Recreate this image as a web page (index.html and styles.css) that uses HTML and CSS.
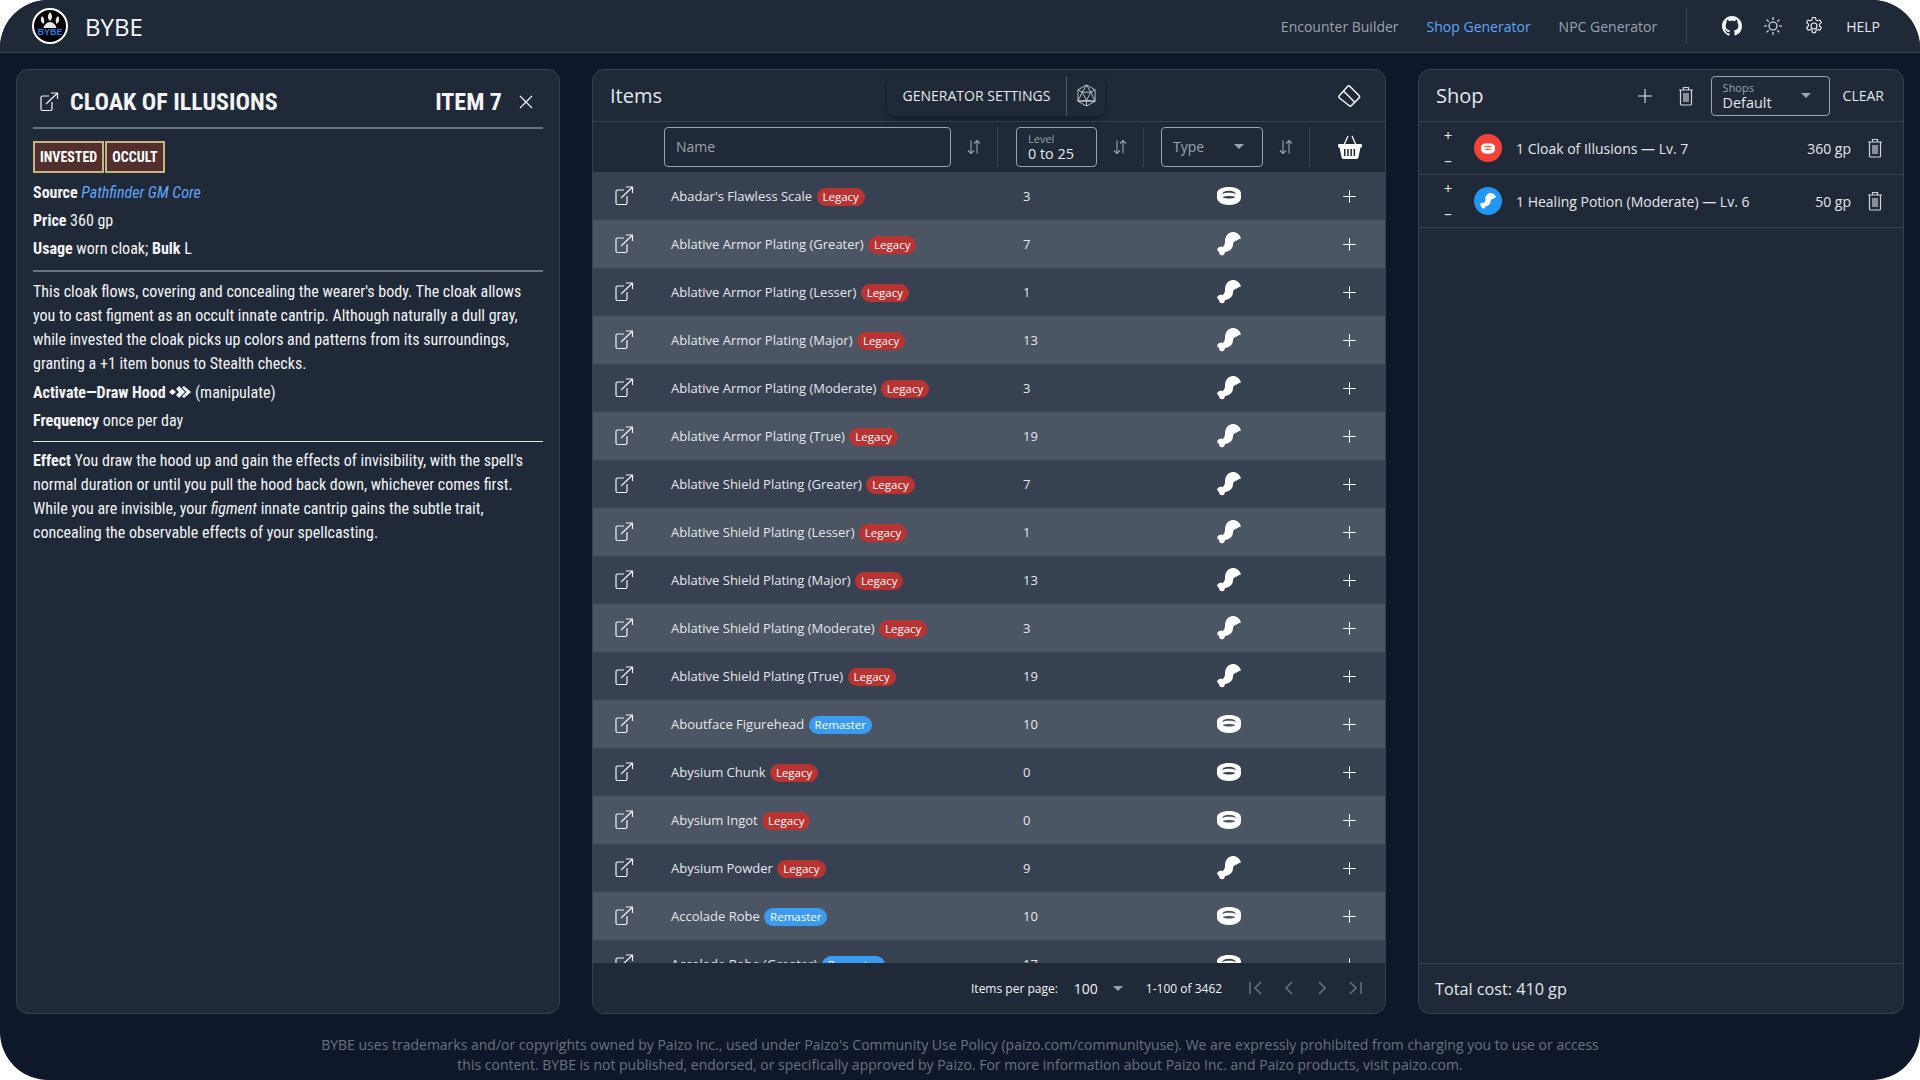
FILE: index.html
```html
<!DOCTYPE html>
<html lang="en">
<head>
    <meta charset="UTF-8">
    <title>BYBE - Shop Generator</title>
    <link rel="stylesheet" href="styles.css">
</head>
<body>
    <svg class="icon-defs">
        <symbol id="i-link" viewBox="0 0 20 20"><path d="M10 4H3.500A1.500 1.500 0 0 0 2 5.500V17a1.500 1.500 0 0 0 1.500 1.500h8A1.500 1.500 0 0 0 13 17v-7M7 12 18 1.500M12 1h6.500v6" fill="none" stroke="currentColor" stroke-width="1.200"/></symbol>
        <symbol id="i-ring" viewBox="0 0 24 18"><path fill-rule="evenodd" fill="currentColor" d="M12 0C5 0 0 2.500 0 6.500v4C0 15 5 18 12 18s12-3 12-7.500v-4C24 2.500 19 0 12 0ZM12 3.800c3.500 0 6 1.200 7 3.200-2-.8-4.400-1.200-7-1.200S7 6.200 5 7c1-2 3.500-3.200 7-3.200Zm0 5.200c2.500 0 4.500.3 6.500 1-1.500 1-3.800 1.600-6.500 1.600S7 11 5.500 10c2-.7 4-1 6.500-1Z"/></symbol>
        <symbol id="i-leg" viewBox="0 0 24 24"><path fill="currentColor" d="M24 6.500C23 2.500 19.500 0 16 0 11.500 0 8 4 8 9.500c0 2.500-.5 4.500-2.500 5.500-1.500-.5-4-.3-5 1.500-.7 1.500.3 3 1.500 3.300 0 1.700.8 3.400 2.800 3.500 2 .2 3.200-1.300 2.900-3 2.500-.8 5-1.500 7-3.800 1.300-1.500 1-4 1.800-6 .8-1.500 3-1.500 5.500-3.500Z"/></symbol>
        <symbol id="i-plus" viewBox="0 0 14 14"><path d="M7 0v14M0 7h14" stroke="currentColor" stroke-width="1.100"/></symbol>
        <symbol id="i-sort" viewBox="0 0 14 16"><path d="M4 1.500v13M1 11.500l3 3 3-3M10 14.500v-13M7 4.500l3-3 3 3" fill="none" stroke="currentColor" stroke-width="1.100"/></symbol>
        <symbol id="i-trash" viewBox="0 0 16 20"><path d="M1 4h14M5.500 4V1.500h5V4M2.500 4v14a1 1 0 0 0 1 1h9a1 1 0 0 0 1-1V4M6 7v9M8 7v9M10 7v9" fill="none" stroke="currentColor" stroke-width="1.200"/></symbol>
        <symbol id="i-first" viewBox="0 0 16 16"><path d="M2 2v12M13 2 7 8l6 6" fill="none" stroke="currentColor" stroke-width="1.500"/></symbol>
        <symbol id="i-prev" viewBox="0 0 16 16"><path d="M11 2 5 8l6 6" fill="none" stroke="currentColor" stroke-width="1.500"/></symbol>
        <symbol id="i-next" viewBox="0 0 16 16"><path d="m5 2 6 6-6 6" fill="none" stroke="currentColor" stroke-width="1.500"/></symbol>
        <symbol id="i-last" viewBox="0 0 16 16"><path d="M14 2v12M3 2l6 6-6 6" fill="none" stroke="currentColor" stroke-width="1.500"/></symbol>
    </svg>

    <div class="app">
        <header class="topbar">
            <svg class="logo" viewBox="0 0 36 36">
                <circle cx="18" cy="18" r="17" fill="#000" stroke="#fff" stroke-width="2"/>
                <path d="M18 4c2.500 3 3 6 0 9-3-3-2.500-6 0-9ZM10 8c2.500 2 3 5 1.500 8-3-2-3.500-5-1.500-8ZM26 8c2 3 1.500 6-1.500 8-1.500-3-1-6 1.500-8ZM18 14c3 0 6 3 6.500 6h-13c.500-3 3.500-6 6.500-6Z" fill="#e5e5e5"/>
                <text class="logo-text" x="18" y="27" text-anchor="middle">BYBE</text>
            </svg>
            <span class="brand">BYBE</span>
            <nav class="topnav">
                <a href="#">Encounter Builder</a>
                <a href="#" class="active">Shop Generator</a>
                <a href="#">NPC Generator</a>
            </nav>
            <div class="top-actions">
                <svg class="top-icon" viewBox="0 0 16 16" width="20" height="20"><path fill="currentColor" d="M8 0C3.580 0 0 3.580 0 8c0 3.540 2.290 6.530 5.470 7.590.4.070.55-.17.55-.38 0-.19-.01-.82-.01-1.490-2.010.37-2.530-.49-2.690-.94-.09-.23-.48-.94-.82-1.130-.28-.15-.68-.52-.01-.53.63-.01 1.080.58 1.230.82.72 1.210 1.870.87 2.330.66.07-.52.28-.87.51-1.070-1.780-.2-3.640-.89-3.640-3.950 0-.87.31-1.590.82-2.150-.08-.2-.36-1.020.08-2.120 0 0 .67-.21 2.200.82.64-.18 1.320-.27 2-.27.68 0 1.360.09 2 .27 1.530-1.040 2.200-.82 2.200-.82.44 1.100.16 1.920.08 2.120.51.56.82 1.270.82 2.150 0 3.070-1.870 3.750-3.650 3.950.29.25.54.73.54 1.480 0 1.070-.01 1.930-.01 2.200 0 .21.15.46.55.38A8.013 8.013 0 0 0 16 8c0-4.420-3.580-8-8-8z"/></svg>
                <svg class="top-icon" viewBox="0 0 20 20" width="20" height="20"><circle cx="10" cy="10" r="4" fill="none" stroke="currentColor" stroke-width="1.100"/><path d="M10 1v3M10 16v3M1 10h3M16 10h3M3.600 3.600l2.100 2.100M14.300 14.300l2.100 2.100M3.600 16.400l2.100-2.100M14.300 5.700l2.100-2.100" stroke="currentColor" stroke-width="1.100"/></svg>
                <svg class="top-icon" viewBox="0 0 20 20" width="20" height="20"><circle cx="10" cy="10" r="3" fill="none" stroke="currentColor" stroke-width="1.100"/><path d="M8.500 1.500h3l.5 2.400 1.600.9 2.300-.8 1.500 2.600-1.800 1.600v1.800l1.800 1.600-1.500 2.600-2.300-.8-1.600.9-.5 2.400h-3l-.5-2.400-1.600-.9-2.300.8-1.500-2.600 1.800-1.600v-1.800L2.600 6.600l1.500-2.600 2.300.8 1.600-.9Z" fill="none" stroke="currentColor" stroke-width="1.100" stroke-linejoin="round"/></svg>
                <span class="help">HELP</span>
            </div>
        </header>

        <main class="panels">
            <section class="panel detail">
                <div class="detail-head">
                    <svg class="link-icon"><use href="#i-link"/></svg>
                    <h2 class="detail-title"><span>CLOAK OF ILLUSIONS</span></h2>
                    <span class="detail-level">ITEM 7</span>
                    <svg class="close-icon" viewBox="0 0 14 14"><path d="m1 1 12 12M13 1 1 13" stroke="currentColor" stroke-width="1.300"/></svg>
                </div>
                <div class="traits">
                    <span class="trait">INVESTED</span><span class="trait">OCCULT</span>
                </div>
                <p class="line"><b>Source</b> <a href="#"><i>Pathfinder GM Core</i></a></p>
                <p class="line"><b>Price</b> 360 gp</p>
                <p class="line"><b>Usage</b> worn cloak; <b>Bulk</b> L</p>
                <hr class="rule">
                <p class="para">This cloak flows, covering and concealing the wearer's body. The cloak allows you to cast figment as an occult innate cantrip. Although naturally a dull gray, while invested the cloak picks up colors and patterns from its surroundings, granting a +1 item bonus to Stealth checks.</p>
                <p class="line activate"><b>Activate—Draw Hood</b> <svg class="actions" viewBox="0 0 22 14"><path fill="currentColor" fill-rule="evenodd" d="M3.500 4 7 7 3.500 10 0 7ZM10 1l6 6-6 6-3-3 3-3-3-3ZM15 1l7 6-7 6-2-1.500L17.500 7 13 2.500Z"/></svg> (manipulate)</p>
                <p class="line"><b>Frequency</b> once per day</p>
                <hr class="rule thin">
                <p class="para"><b>Effect</b> You draw the hood up and gain the effects of invisibility, with the spell's normal duration or until you pull the hood back down, whichever comes first. While you are invisible, your <i>figment</i> innate cantrip gains the subtle trait, concealing the observable effects of your spellcasting.</p>
            </section>

            <section class="panel items">
                <div class="panel-head">
                    <h2 class="panel-title">Items</h2>
                    <div class="gen-btn">
                        <span class="gen-label">GENERATOR SETTINGS</span>
                        <span class="gen-icon">
                            <svg viewBox="0 0 22 24" width="21" height="23"><path d="M11 1 20 6v12l-9 5-9-5V6ZM11 1 6.500 8.500h9ZM6.500 8.500 2 6M15.500 8.500 20 6M6.500 8.500 11 17l4.500-8.500M2 18l4.500-9.500M20 18l-4.500-9.500M2 18h18M11 17v6M11 17 2 18M11 17l9 1" fill="none" stroke="#d1d5db" stroke-width=".9"/></svg>
                        </span>
                    </div>
                    <svg class="eraser" viewBox="0 0 24 24" width="24" height="24"><path d="M13 2.500 22 11.500a1.800 1.800 0 0 1 0 2.500l-7.500 7.500a1.800 1.800 0 0 1-2.500 0L2.500 14a1.800 1.800 0 0 1 0-2.500L10.500 2.500a1.800 1.800 0 0 1 2.500 0ZM6.500 7 17.500 18" fill="none" stroke="currentColor" stroke-width="1.500"/></svg>
                </div>
                <div class="filters">
                    <div class="field field-name">Name</div>
                    <div class="sort-cell"><svg class="sort"><use href="#i-sort"/></svg></div>
                    <div class="field field-level"><span class="field-small">Level</span><span class="field-value">0 to 25</span></div>
                    <div class="sort-cell"><svg class="sort"><use href="#i-sort"/></svg></div>
                    <div class="field field-type">Type<span class="caret"></span></div>
                    <div class="sort-cell"><svg class="sort"><use href="#i-sort"/></svg></div>
                    <div class="basket-cell">
                        <svg viewBox="0 0 24 24" width="24" height="24"><path d="M6 10 10 1M18 10 14 1" stroke="#fff" stroke-width="1.300" fill="none"/><path fill="#fff" fill-rule="evenodd" d="M1 9h22a1 1 0 0 1 1 1v1.500a1 1 0 0 1-1 1h-.5L20.500 22a2 2 0 0 1-2 2h-13a2 2 0 0 1-2-2L1.500 12.500H1a1 1 0 0 1-1-1V10a1 1 0 0 1 1-1ZM6 14v7h1.500v-7Zm3.200 0v7h1.500v-7Zm3.200 0v7h1.500v-7Zm3.200 0v7h1.500v-7Z"/></svg>
                    </div>
                </div>
                <div class="rows">
                    <div class="row"><svg class="link-icon"><use href="#i-link"/></svg><div class="name">Abadar's Flawless Scale <span class="badge legacy">Legacy</span></div><div>3</div><svg class="type-ring"><use href="#i-ring"/></svg><span></span><svg class="plus"><use href="#i-plus"/></svg></div>
                    <div class="row"><svg class="link-icon"><use href="#i-link"/></svg><div class="name">Ablative Armor Plating (Greater) <span class="badge legacy">Legacy</span></div><div>7</div><svg class="type-leg"><use href="#i-leg"/></svg><span></span><svg class="plus"><use href="#i-plus"/></svg></div>
                    <div class="row"><svg class="link-icon"><use href="#i-link"/></svg><div class="name">Ablative Armor Plating (Lesser) <span class="badge legacy">Legacy</span></div><div>1</div><svg class="type-leg"><use href="#i-leg"/></svg><span></span><svg class="plus"><use href="#i-plus"/></svg></div>
                    <div class="row"><svg class="link-icon"><use href="#i-link"/></svg><div class="name">Ablative Armor Plating (Major) <span class="badge legacy">Legacy</span></div><div>13</div><svg class="type-leg"><use href="#i-leg"/></svg><span></span><svg class="plus"><use href="#i-plus"/></svg></div>
                    <div class="row"><svg class="link-icon"><use href="#i-link"/></svg><div class="name">Ablative Armor Plating (Moderate) <span class="badge legacy">Legacy</span></div><div>3</div><svg class="type-leg"><use href="#i-leg"/></svg><span></span><svg class="plus"><use href="#i-plus"/></svg></div>
                    <div class="row"><svg class="link-icon"><use href="#i-link"/></svg><div class="name">Ablative Armor Plating (True) <span class="badge legacy">Legacy</span></div><div>19</div><svg class="type-leg"><use href="#i-leg"/></svg><span></span><svg class="plus"><use href="#i-plus"/></svg></div>
                    <div class="row"><svg class="link-icon"><use href="#i-link"/></svg><div class="name">Ablative Shield Plating (Greater) <span class="badge legacy">Legacy</span></div><div>7</div><svg class="type-leg"><use href="#i-leg"/></svg><span></span><svg class="plus"><use href="#i-plus"/></svg></div>
                    <div class="row"><svg class="link-icon"><use href="#i-link"/></svg><div class="name">Ablative Shield Plating (Lesser) <span class="badge legacy">Legacy</span></div><div>1</div><svg class="type-leg"><use href="#i-leg"/></svg><span></span><svg class="plus"><use href="#i-plus"/></svg></div>
                    <div class="row"><svg class="link-icon"><use href="#i-link"/></svg><div class="name">Ablative Shield Plating (Major) <span class="badge legacy">Legacy</span></div><div>13</div><svg class="type-leg"><use href="#i-leg"/></svg><span></span><svg class="plus"><use href="#i-plus"/></svg></div>
                    <div class="row"><svg class="link-icon"><use href="#i-link"/></svg><div class="name">Ablative Shield Plating (Moderate) <span class="badge legacy">Legacy</span></div><div>3</div><svg class="type-leg"><use href="#i-leg"/></svg><span></span><svg class="plus"><use href="#i-plus"/></svg></div>
                    <div class="row"><svg class="link-icon"><use href="#i-link"/></svg><div class="name">Ablative Shield Plating (True) <span class="badge legacy">Legacy</span></div><div>19</div><svg class="type-leg"><use href="#i-leg"/></svg><span></span><svg class="plus"><use href="#i-plus"/></svg></div>
                    <div class="row"><svg class="link-icon"><use href="#i-link"/></svg><div class="name">Aboutface Figurehead <span class="badge remaster">Remaster</span></div><div>10</div><svg class="type-ring"><use href="#i-ring"/></svg><span></span><svg class="plus"><use href="#i-plus"/></svg></div>
                    <div class="row"><svg class="link-icon"><use href="#i-link"/></svg><div class="name">Abysium Chunk <span class="badge legacy">Legacy</span></div><div>0</div><svg class="type-ring"><use href="#i-ring"/></svg><span></span><svg class="plus"><use href="#i-plus"/></svg></div>
                    <div class="row"><svg class="link-icon"><use href="#i-link"/></svg><div class="name">Abysium Ingot <span class="badge legacy">Legacy</span></div><div>0</div><svg class="type-ring"><use href="#i-ring"/></svg><span></span><svg class="plus"><use href="#i-plus"/></svg></div>
                    <div class="row"><svg class="link-icon"><use href="#i-link"/></svg><div class="name">Abysium Powder <span class="badge legacy">Legacy</span></div><div>9</div><svg class="type-leg"><use href="#i-leg"/></svg><span></span><svg class="plus"><use href="#i-plus"/></svg></div>
                    <div class="row"><svg class="link-icon"><use href="#i-link"/></svg><div class="name">Accolade Robe <span class="badge remaster">Remaster</span></div><div>10</div><svg class="type-ring"><use href="#i-ring"/></svg><span></span><svg class="plus"><use href="#i-plus"/></svg></div>
                    <div class="row"><svg class="link-icon"><use href="#i-link"/></svg><div class="name">Accolade Robe (Greater) <span class="badge remaster">Remaster</span></div><div>17</div><svg class="type-ring"><use href="#i-ring"/></svg><span></span><svg class="plus"><use href="#i-plus"/></svg></div>
                </div>
                <div class="pager">
                    <span class="pager-label">Items per page:</span>
                    <span class="pager-size">100</span>
                    <span class="caret"></span>
                    <span class="pager-range">1-100 of 3462</span>
                    <svg class="pager-icon"><use href="#i-first"/></svg>
                    <svg class="pager-icon"><use href="#i-prev"/></svg>
                    <svg class="pager-icon"><use href="#i-next"/></svg>
                    <svg class="pager-icon"><use href="#i-last"/></svg>
                </div>
            </section>

            <section class="panel shop">
                <div class="panel-head shop-head">
                    <h2 class="panel-title">Shop</h2>
                    <svg class="shop-plus"><use href="#i-plus"/></svg>
                    <svg class="trash"><use href="#i-trash"/></svg>
                    <div class="field field-shops"><span class="field-small">Shops</span><span class="field-value">Default</span><span class="caret"></span></div>
                    <span class="clear">CLEAR</span>
                </div>
                <div class="shop-row">
                    <div class="stepper"><span>+</span><span>–</span></div>
                    <span class="dot red"><svg class="dot-ring"><use href="#i-ring"/></svg></span>
                    <span class="shop-name">1 Cloak of Illusions — Lv. 7</span>
                    <span class="shop-price">360 gp</span>
                    <svg class="trash"><use href="#i-trash"/></svg>
                </div>
                <div class="shop-row">
                    <div class="stepper"><span>+</span><span>–</span></div>
                    <span class="dot blue"><svg class="dot-leg"><use href="#i-leg"/></svg></span>
                    <span class="shop-name">1 Healing Potion (Moderate) — Lv. 6</span>
                    <span class="shop-price">50 gp</span>
                    <svg class="trash"><use href="#i-trash"/></svg>
                </div>
                <div class="shop-total">Total cost: 410 gp</div>
            </section>
        </main>

        <footer class="legal">
            BYBE uses trademarks and/or copyrights owned by Paizo Inc., used under Paizo's Community Use Policy (paizo.com/communityuse). We are expressly prohibited from charging you to use or access this content. BYBE is not published, endorsed, or specifically approved by Paizo. For more information about Paizo Inc. and Paizo products, visit paizo.com.
        </footer>
    </div>
</body>
</html>
```

FILE: styles.css
```css
* {
    box-sizing: border-box;
}
html, body {
    margin: 0;
    height: 100%;
    background: #fff;
}
body {
    font-family: "Open Sans", sans-serif;
    color: #e5e7eb;
    overflow: hidden;
}
h2, p {
    margin: 0;
    font-weight: normal;
}
a {
    text-decoration: none;
    color: inherit;
}
.icon-defs {
    width: 0;
    height: 0;
    display: block;
}
.app {
    width: 1920px;
    height: 1080px;
    background: #0f172a;
    border-radius: 48px;
    overflow: hidden;
    display: flex;
    flex-direction: column;
}

/* top bar */
.topbar {
    height: 53px;
    flex: none;
    display: flex;
    align-items: center;
    padding: 0 40px 0 32px;
    background: #1f2937;
    border-bottom: 1px solid #374151;
}
.logo {
    width: 36px;
    height: 36px;
}
.logo-text {
    font-family: "Liberation Sans", sans-serif;
    font-size: 9px;
    font-weight: bold;
    fill: #1a7fe8;
}
.brand {
    margin-left: 17px;
    font-size: 24px;
    color: #f9fafb;
}
.topnav {
    margin-left: auto;
    display: flex;
    gap: 28px;
    font-size: 14px;
    color: #9ca3af;
}
.topnav .active {
    color: #60a5fa;
}
.top-actions {
    margin-left: 29px;
    padding-left: 35px;
    height: 36px;
    border-left: 1px solid #374151;
    display: flex;
    align-items: center;
    gap: 21px;
}
.top-icon {
    color: #f3f4f6;
}
.help {
    font-size: 14px;
    margin-left: 1px;
}

/* panels */
.panels {
    flex: none;
    height: 961px;
    padding: 16px 16px 0;
    display: grid;
    grid-template-columns: 544px 794px 486px;
    column-gap: 32px;
}
.panel {
    background: #1f2937;
    border: 1px solid #374151;
    border-radius: 12px;
    overflow: hidden;
    display: flex;
    flex-direction: column;
}

/* left detail panel */
.detail {
    padding: 0 16px;
    font-family: "Roboto", sans-serif;
    font-stretch: 75%;
    font-size: 16px;
    color: #f3f4f6;
}
.detail-head {
    height: 59px;
    flex: none;
    display: flex;
    align-items: center;
    border-bottom: 2px solid #6b7280;
    padding: 6px 2px 0 6px;
}
.detail-head .link-icon {
    width: 20px;
    height: 20px;
}
.detail-title {
    flex: 1;
    margin-left: 11px;
    font-size: 24px;
    font-weight: bold;
}
.detail-level {
    font-size: 24px;
    font-weight: bold;
}
.close-icon {
    width: 14px;
    height: 14px;
    margin-left: 17px;
    margin-right: 8px;
}
.traits {
    display: flex;
    margin-top: 12px;
    margin-bottom: 6px;
}
.trait {
    height: 32px;
    padding: 0 5px;
    display: flex;
    align-items: center;
    background: #522e2c;
    border: 2px solid #c9b37e;
    font-weight: bold;
    font-size: 14px;
    color: #fff;
}
.trait + .trait {
    margin-left: 1px;
}
.line {
    line-height: 28px;
}
.line a {
    color: #60a5fa;
}
.rule {
    width: 100%;
    margin: 7px 0 8px;
    border: 0;
    border-top: 2px solid #6b7280;
}
.rule.thin {
    border-top: 1px solid #e5e7eb;
    margin: 6px 0 7px;
}
.para {
    line-height: 24px;
}
.activate {
    margin-top: 3px;
    line-height: 28px;
}
.actions {
    width: 22px;
    height: 14px;
    vertical-align: -1px;
}

/* items panel */
.panel-head {
    height: 52px;
    flex: none;
    display: flex;
    align-items: center;
    padding: 0 17px;
    border-bottom: 1px solid #374151;
}
.panel-title {
    font-size: 20px;
    color: #e5e7eb;
}
.gen-btn {
    margin-left: 225px;
    height: 40px;
    display: flex;
    align-items: center;
    background: #1f2937;
    border-radius: 8px;
    box-shadow: 0 3px 6px rgba(0, 0, 0, 0.35);
}
.gen-label {
    width: 179px;
    text-align: center;
    font-size: 14px;
}
.gen-icon {
    width: 39px;
    height: 40px;
    border-left: 1px solid #4b5563;
    display: flex;
    align-items: center;
    justify-content: center;
}
.eraser {
    margin-left: auto;
    margin-right: 7px;
    color: #f3f4f6;
}
.filters {
    height: 50px;
    flex: none;
    display: flex;
    align-items: center;
    padding-left: 71px;
}
.field {
    height: 40px;
    border: 1px solid #9ca3af;
    border-radius: 4px;
    position: relative;
    flex: none;
    font-size: 14px;
    color: #9ca3af;
}
.field-name {
    width: 287px;
    line-height: 38px;
    padding-left: 11px;
}
.field-level {
    width: 81px;
    margin-left: 18px;
    padding-left: 11px;
}
.field-small {
    display: block;
    font-size: 11px;
    line-height: 12px;
    padding-top: 5px;
}
.field-value {
    display: block;
    font-size: 14.400px;
    line-height: 17px;
    color: #e5e7eb;
}
.field-type {
    width: 102px;
    margin-left: 17px;
    line-height: 38px;
    padding-left: 11px;
}
.caret {
    width: 0;
    height: 0;
    border-left: 5px solid transparent;
    border-right: 5px solid transparent;
    border-top: 5px solid #9ca3af;
}
.field .caret {
    position: absolute;
    right: 18px;
    top: 16px;
}
.sort-cell {
    width: 47px;
    height: 40px;
    flex: none;
    border-right: 1px solid #374151;
    display: flex;
    align-items: center;
    justify-content: center;
}
.sort {
    width: 14px;
    height: 16px;
    color: #9ca3af;
}
.basket-cell {
    flex: 1;
    display: flex;
    justify-content: center;
    padding-left: 4px;
}
.rows {
    flex: 1;
    min-height: 0;
    overflow: hidden;
}
.row {
    height: 48px;
    display: grid;
    grid-template-columns: 62px 368px 156px 100px 34px 72px;
    align-items: center;
    font-size: 13px;
    background: #374151;
    color: #e5e7eb;
}
.row:nth-child(even) {
    background: #4b5563;
}
.link-icon {
    width: 20px;
    height: 20px;
    color: #f3f4f6;
    justify-self: center;
}
.name {
    padding-left: 16px;
}
.badge {
    display: inline-block;
    height: 18px;
    line-height: 18px;
    padding: 0 6px;
    border-radius: 9px;
    font-size: 11.500px;
    color: #fff;
    margin-left: 1px;
}
.legacy {
    background: #b93333;
}
.remaster {
    background: #3b9bef;
}
.type-ring {
    width: 24px;
    height: 18px;
    justify-self: center;
    color: #fff;
}
.type-leg {
    width: 24px;
    height: 24px;
    justify-self: center;
    color: #fff;
}
.plus {
    width: 13px;
    height: 13px;
    justify-self: center;
    color: #fff;
}
.pager {
    height: 50px;
    flex: none;
    display: flex;
    align-items: center;
    padding-left: 378px;
    font-size: 12px;
    background: #1f2937;
    color: #f3f4f6;
}
.pager-size {
    margin-left: 16px;
    font-size: 14px;
}
.pager .caret {
    margin-left: 15px;
}
.pager-range {
    margin-left: 23px;
    width: 102px;
}
.pager-icon {
    width: 16px;
    height: 16px;
    color: #6b7280;
    margin-right: 17px;
}

/* shop panel */
.shop-head {
    padding-right: 19px;
}
.shop-plus {
    width: 14px;
    height: 14px;
    margin-left: auto;
    color: #e5e7eb;
}
.trash {
    width: 16px;
    height: 20px;
    color: #d1d5db;
    flex: none;
}
.shop-head .trash {
    margin-left: 26px;
}
.field-shops {
    width: 119px;
    margin-left: 17px;
    padding-left: 11px;
}
.clear {
    margin-left: 13px;
    font-size: 14px;
}
.shop-row {
    height: 53px;
    flex: none;
    display: flex;
    align-items: center;
    padding: 0 20px 0 22px;
    border-bottom: 1px solid #374151;
    font-size: 14px;
}
.stepper {
    width: 14px;
    display: flex;
    flex-direction: column;
    align-items: center;
    gap: 6px;
    font-size: 15px;
    line-height: 19px;
}
.dot {
    width: 28px;
    height: 28px;
    border-radius: 50%;
    margin-left: 19px;
    display: flex;
    align-items: center;
    justify-content: center;
    color: #fff;
}
.dot.red {
    background: #f44336;
}
.dot.blue {
    background: #2196f3;
}
.dot-ring {
    width: 14px;
    height: 11px;
}
.dot-leg {
    width: 16px;
    height: 16px;
}
.shop-name {
    margin-left: 14px;
    flex: 1;
}
.shop-price {
    margin-right: 16px;
}
.shop-total {
    margin-top: auto;
    height: 50px;
    flex: none;
    display: flex;
    align-items: center;
    padding-left: 16px;
    font-size: 16.200px;
    border-top: 1px solid #374151;
}

/* legal text */
.legal {
    width: 1280px;
    margin: 21px auto 0;
    text-align: center;
    font-size: 14px;
    line-height: 20px;
    color: #6b7280;
}
```
